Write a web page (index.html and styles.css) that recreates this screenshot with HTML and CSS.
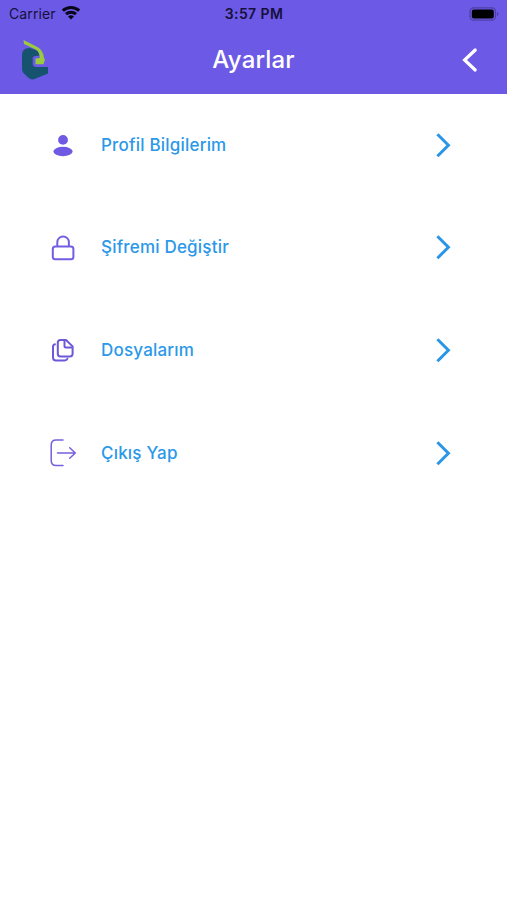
FILE: index.html
```html
<!DOCTYPE html>
<html lang="tr">
<head>
    <meta charset="UTF-8">
    <meta name="viewport" content="width=device-width, initial-scale=1.0">
    <title>Ayarlar</title>
    <link rel="stylesheet" href="styles.css">
</head>
<body>
    <header class="header">
        <div class="status-bar">
            <div class="carrier">
                <span>Carrier</span>
                <svg width="20" height="15" viewBox="0 0 20 15" fill="none" stroke="#08061a" stroke-width="3">
                    <path d="M1.8 5.7a11.8 11.8 0 0 1 16.4 0"/>
                    <path d="M5 9.2a7.2 7.2 0 0 1 10 0"/>
                    <path d="M10 14.5L7 11.6a4.3 4.3 0 0 1 6 0z" fill="#08061a" stroke="none"/>
                </svg>
            </div>
            <div class="time">3:57 PM</div>
            <div class="battery">
                <svg width="30" height="14" viewBox="0 0 30 14">
                    <rect x="1" y="0.8" width="25.5" height="12.4" rx="3.6" fill="none" stroke="#4d3fa6" stroke-width="1.2"/>
                    <rect x="2.8" y="2.6" width="22" height="8.8" rx="2" fill="#000"/>
                    <path d="M28 5v4c2-.8 2-3.2 0-4z" fill="#4d3fa6"/>
                </svg>
            </div>
        </div>
        <div class="nav-bar">
            <svg class="logo" width="28" height="40" viewBox="0 0 28 40">
                <path d="M5 8.5L9 8l8 3 1.500 4.500-4 .5c-2 0-2.800 1-2.800 2.500v5c0 2 1 3.500 3.300 3.500H27v6.500L13.500 39c-2 .8-4 .5-6-1.200L3.500 34C1.500 32.500 1 30.500 1 28V15c0-3.500 1.500-5.500 4-6.500z" fill="#15536f"/>
                <path d="M2.500 0l13 6.500c4.500 2.500 7 6 7.500 12l1 .8-1.500 5H14.500v-5.800l4.300-.5c0-4.500-1.500-7-5-9L3 4z" fill="#9bcb3c"/>
            </svg>
            <h1>Ayarlar</h1>
            <svg class="back" width="16" height="26" viewBox="0 0 16 26" fill="none" stroke="#fff" stroke-width="3.2" stroke-linecap="round">
                <path d="M13.2 3L2.600 13l10.600 10"/>
            </svg>
        </div>
    </header>

    <main class="menu">
        <div class="menu-item">
            <svg class="icon" width="28" height="28" viewBox="0 0 28 28" fill="#6f5ae3">
                <circle cx="14" cy="8.9" r="4.9"/>
                <ellipse cx="14" cy="20.5" rx="9.6" ry="4.7"/>
            </svg>
            <span class="label">Profil Bilgilerim</span>
            <svg class="arrow" width="16" height="26" viewBox="0 0 16 26">
                <path d="M2.4 2.2L13.4 13.200 2.4 24.200"/>
            </svg>
        </div>
        <div class="menu-item">
            <svg class="icon" width="28" height="28" viewBox="0 0 28 28" fill="none" stroke="#735ee3" stroke-width="2">
                <rect x="3.8" y="13.4" width="20.6" height="12.8" rx="2.5"/>
                <path d="M8.3 13.400V9.200a5.800 5.800 0 0 1 11.600 0v4.200"/>
            </svg>
            <span class="label">Şifremi Değiştir</span>
            <svg class="arrow" width="16" height="26" viewBox="0 0 16 26">
                <path d="M2.4 2.2L13.4 13.200 2.4 24.200"/>
            </svg>
        </div>
        <div class="menu-item">
            <svg class="icon" width="28" height="28" viewBox="0 0 28 28" fill="none" stroke="#6f58d8" stroke-width="2" stroke-linejoin="round" stroke-linecap="round">
                <path d="M11.4 4H17l6.600 6.400v7.400a2.600 2.600 0 0 1-2.600 2.600h-9.600a2.600 2.600 0 0 1-2.600-2.600V6.600A2.600 2.600 0 0 1 11.400 4z"/>
                <path d="M15.500 4.200v5.800a1.500 1.500 0 0 0 1.500 1.500h6.200"/>
                <path d="M6 8.200c-1.200.3-2 1.200-2 2.600v10.800a3 3 0 0 0 3 3h8.600c1.400 0 2.400-.6 2.800-1.800"/>
            </svg>
            <span class="label">Dosyalarım</span>
            <svg class="arrow" width="16" height="26" viewBox="0 0 16 26">
                <path d="M2.4 2.2L13.4 13.200 2.4 24.200"/>
            </svg>
        </div>
        <div class="menu-item">
            <svg class="icon" width="28" height="28" viewBox="0 0 28 28" fill="none" stroke="#765fdc" stroke-width="1.5" stroke-linecap="round" stroke-linejoin="round">
                <path d="M14 1H7.200C4 1 2.200 2.800 2.200 6v15.500c0 3.200 1.800 5 5 5H14"/>
                <path d="M8.500 14h17.800M20.700 8.800l5.600 5.200-5.600 5.200"/>
            </svg>
            <span class="label">Çıkış Yap</span>
            <svg class="arrow" width="16" height="26" viewBox="0 0 16 26">
                <path d="M2.4 2.2L13.4 13.200 2.4 24.200"/>
            </svg>
        </div>
    </main>
</body>
</html>
```

FILE: styles.css
```css
* {
    box-sizing: border-box;
}
body {
    margin: 0;
    background-color: #fff;
    font-family: Inter, "Liberation Sans", sans-serif;
}
.header {
    height: 93.5px;
    background-color: #6c5ae6;
}
.status-bar {
    display: grid;
    grid-template-columns: 1fr auto 1fr;
    align-items: center;
    height: 27px;
    padding: 0 8px 0 9px;
    font-size: 14px;
    color: #15103a;
}
.carrier {
    display: flex;
    align-items: center;
    gap: 5px;
    letter-spacing: 0.1px;
}
.carrier svg {
    margin-bottom: 2px;
}
.time {
    font-weight: 600;
    font-size: 14px;
    letter-spacing: 0.4px;
}
.battery {
    display: flex;
    justify-content: flex-end;
}
.nav-bar {
    display: grid;
    grid-template-columns: 1fr auto 1fr;
    align-items: center;
    height: 66px;
    padding: 0 29px 0 21px;
}
.nav-bar h1 {
    margin: 0 -4px 2px 4px;
    font-size: 24px;
    font-weight: 500;
    letter-spacing: 0.15px;
    color: #fff;
}
.back {
    justify-self: end;
}
.menu-item {
    display: flex;
    align-items: center;
    height: 102.6px;
    padding: 0 56px 0 49px;
}
.icon {
    margin-right: 24px;
}
.label {
    flex: 1;
    font-size: 17px;
    font-weight: 500;
    letter-spacing: 0.2px;
    color: #2b98e8;
}
.arrow {
    fill: none;
    stroke: #2b95e6;
    stroke-width: 3;
}
```
